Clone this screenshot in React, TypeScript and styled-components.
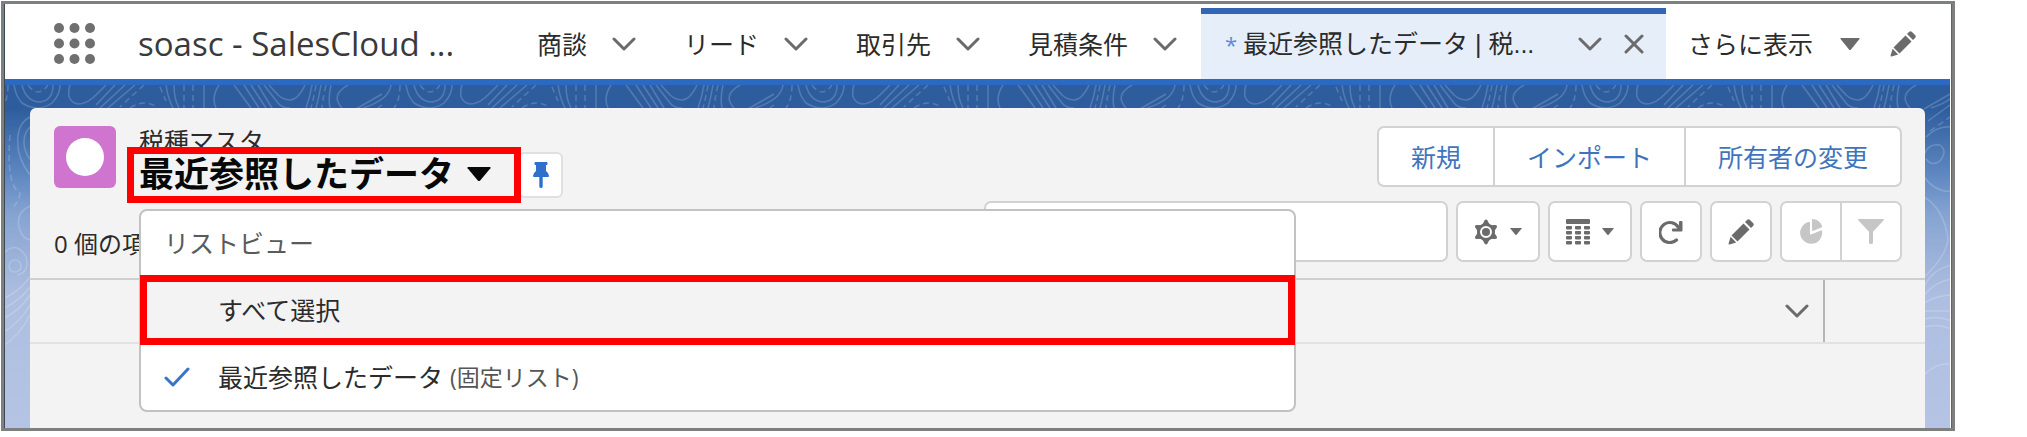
import React from "react";
import styled, { createGlobalStyle, css } from "styled-components";

const GlobalStyle = createGlobalStyle`
  *, *::before, *::after { box-sizing: border-box; }
  body {
    margin: 0;
    background: #fff;
    color: #2b2b2b;
    font-family: "Open Sans", "Noto Sans CJK JP", sans-serif;
    font-size: 25px;
    line-height: 30px;
  }
  button, input { font: inherit; color: inherit; }
  button { padding: 0; border: 0; background: none; cursor: pointer; }
  svg { display: block; flex: none; }
  ul { margin: 0; padding: 0; list-style: none; }
`;

const Frame = styled.div`
  margin: 1px 72px 0 1px;
  border: 3px solid #7e807f;
  box-shadow: inset 1px 0 #3d4a52, inset -1px 0 #5d6670;
  padding: 0 2px 0 1px;
`;

/* ---------- global navigation ---------- */

const NavBar = styled.header`
  display: flex;
  align-items: stretch;
  height: 81px;
  padding: 4px 0 0 49px;
  border-bottom: 6px solid #2b69c3;
  background: #fff;
  white-space: nowrap;
`;

const Launcher = styled.button`
  display: flex;
  align-items: center;
`;

const AppName = styled.div`
  display: flex;
  align-items: center;
  width: 418px;
  padding-left: 43px;
  color: #3a3a3a;
  font-size: 33px;
`;

const NavItems = styled.nav`
  display: flex;
`;

const NavItem = styled.div`
  display: flex;
  align-items: center;
  gap: 25px;
  padding: 0 24px;
`;

const NavLink = styled.a`
  color: inherit;
  text-decoration: none;
`;

const ActiveTab = styled.div`
  display: flex;
  align-items: center;
  width: 465px;
  padding: 0 22px 0 24px;
  background: #e6eff9;
  box-shadow: inset 0 6px #3465b5;
`;

const TabLink = styled(NavLink)`
  font-family: "Liberation Sans", "Noto Sans CJK JP", sans-serif;
`;

const Unsaved = styled.span`
  width: 18px;
  color: #5b8bdc;
  font-size: 22px;
`;

const TabActions = styled.div`
  display: flex;
  align-items: center;
  gap: 22px;
  margin-left: auto;
`;

const MoreButton = styled.button`
  display: flex;
  align-items: center;
  gap: 27px;
  padding: 0 24px 0 22px;
`;

const EditNav = styled.button`
  padding: 0 6px;
`;

/* ---------- page ---------- */

const Backdrop = styled.main`
  position: relative;
  padding: 23px 25px 0;
  background: linear-gradient(#2e5d9e 0, #2e5d9e 24px, #5f88c2 90px, #86a4d2 130px, #adbee0 210px, #b5c4e4 100%);
`;

const Contours = styled.svg`
  position: absolute;
  inset: 0;
  width: 100%;
  height: 100%;
`;

const Card = styled.section`
  position: relative;
  padding-bottom: 84px;
  border-radius: 6px 6px 0 0;
  background: #f3f3f3;
`;

const CardHeader = styled.div`
  display: flex;
  justify-content: space-between;
  padding: 18px 23px 16px 24px;
`;

const Identity = styled.div`
  display: flex;
  align-items: flex-start;
  gap: 11px;
`;

const ObjectIcon = styled.div`
  display: grid;
  place-items: center;
  width: 62px;
  height: 62px;
  border-radius: 6px;
  background: #cf75cf;
`;

const ObjectName = styled.div`
  padding-left: 12px;
`;

const TitleRow = styled.div`
  position: relative;
  display: flex;
  align-items: center;
  margin-top: -9px;
`;

const highlighted = css`
  border: 7px solid #fe0000;
`;

const TitleButton = styled.button`
  ${highlighted}
  position: relative;
  z-index: 1;
  display: flex;
  align-items: center;
  gap: 13px;
  height: 56px;
  padding: 0 23px 2px 5px;
  background: #f3f3f3;
  color: #080808;
  font-size: 35px;
  font-weight: 700;
  line-height: 36px;
  white-space: nowrap;
`;

const PinButton = styled.button`
  display: grid;
  place-items: center;
  width: 45px;
  height: 46px;
  margin-left: -3px;
  border: 2px solid #e0e0e0;
  border-radius: 6px;
  background: #fff;
`;

const ItemCount = styled.p`
  margin: 26px 0 0;
  font-size: 24px;
`;

const Controls = styled.div`
  display: flex;
  flex-direction: column;
  align-items: flex-end;
  gap: 14px;
`;

const Group = styled.div`
  display: flex;
  height: 61px;
  border: 2px solid #d2d2d2;
  border-radius: 7px;
  background: #fff;
  overflow: hidden;
`;

const ActionButton = styled.button`
  padding: 0 32px;
  color: #3f74bd;

  & + & { border-left: 2px solid #d2d2d2; }
`;

const Tools = styled.div`
  display: flex;
  gap: 8px;
`;

const Search = styled.input`
  width: 464px;
  height: 61px;
  padding: 0 20px;
  border: 2px solid #d2d2d2;
  border-radius: 7px;
  background: #fff;
`;

const ToolButton = styled.button<{ $wide?: boolean }>`
  display: flex;
  align-items: center;
  justify-content: center;
  gap: 12px;
  width: ${(p) => (p.$wide ? 80 : 58)}px;
  color: #6b6b6b;

  &:disabled { color: #c6c6c6; }
  & + & { width: 60px; border-left: 2px solid #d2d2d2; }
`;

const Table = styled.table`
  width: 100%;
  border-spacing: 0;
  border-top: 2px solid #cfcfcf;
  border-bottom: 2px solid #e2e2e2;
`;

const HeadCell = styled.th<{ $narrow?: boolean }>`
  width: ${(p) => (p.$narrow ? "100px" : "auto")};
  height: 62px;
  padding: 0 14px;
  border-right: ${(p) => (p.$narrow ? "0" : "2px solid #b5b5b5")};
`;

const SortButton = styled.button`
  display: block;
  margin-left: auto;
`;

/* ---------- list view menu ---------- */

const Menu = styled.div`
  position: absolute;
  z-index: 2;
  top: 62px;
  left: 12px;
  width: 1157px;
  border: 2px solid #c2c2c2;
  border-radius: 8px;
  background: #fff;
  white-space: nowrap;
`;

const MenuLabel = styled.div`
  padding: 17px 23px;
  color: #5a5a5a;
`;

const MenuItem = styled.button<{ $active?: boolean }>`
  display: flex;
  align-items: center;
  width: 100%;
  padding: 17px 23px 18px;
  text-align: left;

  ${(p) =>
    p.$active &&
    css`
      ${highlighted}
      width: calc(100% + 2px);
      margin: 0 -1px;
      padding: 13px 17px;
      background: #f3f3f3;
    `}
`;

const CheckSlot = styled.span`
  width: 54px;
`;

const Note = styled.span`
  margin-left: 7px;
  color: #555;
  font-size: 23px;
`;

/* ---------- icons ---------- */

const Chevron = () => (
  <svg width="24" height="16" viewBox="0 0 24 16" aria-hidden="true">
    <path d="M2 3l10 10L22 3" fill="none" stroke="#6b6b6b" strokeWidth="3" strokeLinecap="round" strokeLinejoin="round" />
  </svg>
);

const Caret = ({ w, h, color }: { w: number; h: number; color: string }) => (
  <svg width={w} height={h} viewBox="0 0 20 12" preserveAspectRatio="none" aria-hidden="true">
    <path d="M1 0h18q1 0 .5 1L11 11.500q-1 1-2 0L.5 1Q0 0 1 0z" fill={color} />
  </svg>
);

const Pencil = () => (
  <svg width="26" height="26" viewBox="0 0 26 26" fill="#6b6b6b" aria-hidden="true">
    <path d="M15.500 4.500l6 6L9.500 22.500l-6-6z" />
    <path d="M17 3l2-2q1.500-1.500 3 0l3 3q1.500 1.500 0 3l-2 2z" />
    <path d="M2.600 17.800l5.600 5.600L1.500 25.400Q.3 25.700.6 24.500z" />
  </svg>
);

const Close = () => (
  <svg width="20" height="20" viewBox="0 0 20 20" aria-hidden="true">
    <path d="M2 2l16 16M18 2L2 18" fill="none" stroke="#6b6b6b" strokeWidth="3" strokeLinecap="round" />
  </svg>
);

const Dots = () => (
  <svg width="41" height="41" viewBox="0 0 41 41" fill="#6f6f6f" aria-hidden="true">
    {[5, 20.5, 36].map((y) => [5, 20.5, 36].map((x) => <circle key={`${x}-${y}`} cx={x} cy={y} r="5" />))}
  </svg>
);

const Pin = () => (
  <svg width="16" height="26" viewBox="0 0 16 26" fill="#2f70cc" aria-hidden="true">
    <path d="M2.500 0h11q1 0 1 1v1q0 1-1 1H13v6q3 2 3 5 0 1-1 1h-5.300v9.500q0 1.500-1.700 1.500t-1.700-1.500V15H1q-1 0-1-1 0-3 3-5V3h-.5q-1 0-1-1V1q0-1 1-1z" />
  </svg>
);

const Gear = () => (
  <svg width="24" height="26" viewBox="0 0 24 26" aria-hidden="true">
    <g fill="#6b6b6b">
      <circle cx="12" cy="13" r="9" />
      {[0, 60, 120, 180, 240, 300].map((a) => (
        <path key={a} d="M8 6.500L10.500 1.500q1.500-2 3 0L16 6.500z" transform={`rotate(${a} 12 13)`} />
      ))}
    </g>
    <circle cx="12" cy="13" r="5" fill="none" stroke="#fff" strokeWidth="2" />
  </svg>
);

const Grid = () => (
  <svg width="24" height="26" viewBox="0 0 24 26" fill="#6b6b6b" aria-hidden="true">
    <rect width="24" height="5" rx="1" />
    {[7, 12, 17, 22].map((y) => [0, 9, 18].map((x) => <rect key={`${x}-${y}`} x={x} y={y} width="6" height="3.400" rx=".8" />))}
  </svg>
);

const Refresh = () => (
  <svg width="24" height="24" viewBox="0 0 24 24" aria-hidden="true">
    <path d="M17.500 20A10 10 0 1 1 19.500 7.500" fill="none" stroke="#6b6b6b" strokeWidth="3.200" strokeLinecap="round" />
    <path d="M21 1h1.500q1 0 1 1v8.500q0 1-1 1H14q-1 0-1-1V9.500q0-1 1-1h6V2q0-1 1-1z" fill="#6b6b6b" />
  </svg>
);

const Pie = () => (
  <svg width="24" height="25" viewBox="0 0 24 25" fill="currentColor" aria-hidden="true">
    <path d="M10 3q1-.2 1 .8v11q0 1 .9.6l10-4q1-.4 1.100.6A11 11 0 1 1 10 3z" />
    <path d="M13 1q0-1 1-.9 7 .9 9 7 .3 1-.6 1.300l-8.200 3.300q-1.200.5-1.200-.7z" />
  </svg>
);

const Funnel = () => (
  <svg width="26" height="25" viewBox="0 0 26 25" fill="currentColor" aria-hidden="true">
    <path d="M1 0h24q1.500 0 .7 1.200L15 12.800V23.500q0 1.500-1.500 1.500h-1q-1.500 0-1.500-1.500V12.800L.3 1.200Q-.5 0 1 0z" />
  </svg>
);

const Check = () => (
  <svg width="26" height="20" viewBox="0 0 26 20" aria-hidden="true">
    <path d="M2 11l7 7L24 2" fill="none" stroke="#3a74c8" strokeWidth="3" strokeLinecap="round" strokeLinejoin="round" />
  </svg>
);

const Topography = () => (
  <Contours aria-hidden="true">
    <defs>
      <pattern id="contours" x="-107" y="0" width="392" height="400" patternUnits="userSpaceOnUse">
        <g fill="none" stroke="#fff" strokeOpacity=".18" strokeWidth="1.500">
          <path d="M0 15q8 0 15-15M22 0q-2 12-6 23M31 0q-2 12-5 23M41 0q-3 12-1 23M58 0Q40 10 52 23M101 0q-2 15-28 23" />
          <path d="M116 0q2 12 8 18 16 10 30 0 8-8 8-18M124 0q4 16 17 17 14-1 14-17M172 0q-5 16 8 19 10 0 20-11l8-8" />
          <path d="M217 0l-19 20M227 0l-25 23M237 0l-27 23M268 0q2 14 7 23M276 0q0 14 5 23M306 0v23M321 0q-8 12-3 23" />
          <path d="M336 0l17 23M346 0l15 23M353 0l15 23M360 0l14 23M366 0l14 18q4 5 12 5M371 0l9 10q6 5 12 5" />
          <path d="M132 32c-16 8-17 36 0 58M132 42c-8 8-8 22 0 32M132 121q-16 8-10 24 2 8 10 10M104 170q14-16 24 2 4 14-8 18M104 214q16-6 28-22M104 224q18-8 28-22M104 234q18-8 28-24M104 248q18-10 28-28M104 262q18-12 28-32" />
          <circle cx="117" cy="181" r="6" />
          <path d="M66 24l26-15M70 36l22-16M68 52q12-12 26-10M66 70q4-12 16-10 8 6 0 16-8 6-14-2M66 92q12 16 28 14M66 112q20 12 24 42-2 18-24 38M66 202q8-18 28-22M66 210q12-14 28-16M66 218q14-8 28-8M66 226h28M66 234q14-4 28 2M66 242q14-4 28 2M66 290q14-14 28-10" />
          <g strokeDasharray="6 4">
            <path d="M26 0q-2 12-5 23M36 0q-3 12-4 23M110 0q0 15-6 23M130 0q10 14 20 0M246 0l-24 22M232 23q15-10 28 0M262 2l6 14M286 0v23M295 0v23M112 50q-4 50 10 58-2 12-10 16M72 46l20-14" />
          </g>
        </g>
      </pattern>
    </defs>
    <rect width="100%" height="100%" fill="url(#contours)" />
  </Contours>
);

const navItems = ["商談", "リード", "取引先", "見積条件"];

export default function App() {
  return (
    <>
      <GlobalStyle />
      <Frame>
        <NavBar>
          <Launcher aria-label="アプリケーションランチャー">
            <Dots />
          </Launcher>
          <AppName>soasc - SalesCloud ...</AppName>
          <NavItems>
            {navItems.map((name) => (
              <NavItem key={name}>
                <NavLink href="#">{name}</NavLink>
                <button aria-label={`${name} メニュー`}>
                  <Chevron />
                </button>
              </NavItem>
            ))}
            <ActiveTab>
              <Unsaved>*</Unsaved>
              <TabLink href="#" aria-current="page">最近参照したデータ | 税...</TabLink>
              <TabActions>
                <button aria-label="タブメニュー">
                  <Chevron />
                </button>
                <button aria-label="タブを閉じる">
                  <Close />
                </button>
              </TabActions>
            </ActiveTab>
            <MoreButton>
              さらに表示
              <Caret w={20} h={12} color="#6b6b6b" />
            </MoreButton>
            <EditNav aria-label="ナビゲーションを編集">
              <Pencil />
            </EditNav>
          </NavItems>
        </NavBar>

        <Backdrop>
          <Topography />
          <Card>
            <CardHeader>
              <div>
                <Identity>
                  <ObjectIcon>
                    <svg width="38" height="38" viewBox="0 0 38 38" aria-hidden="true">
                      <circle cx="19" cy="19" r="19" fill="#fff" />
                    </svg>
                  </ObjectIcon>
                  <div>
                    <ObjectName>税種マスタ</ObjectName>
                    <TitleRow>
                      <TitleButton aria-haspopup="menu" aria-expanded="true">
                        最近参照したデータ
                        <Caret w={24} h={14} color="#080808" />
                      </TitleButton>
                      <PinButton aria-label="リストビューを固定">
                        <Pin />
                      </PinButton>
                      <Menu>
                        <MenuLabel>リストビュー</MenuLabel>
                        <ul>
                          <li>
                            <MenuItem $active>
                              <CheckSlot />
                              すべて選択
                            </MenuItem>
                          </li>
                          <li>
                            <MenuItem>
                              <CheckSlot>
                                <Check />
                              </CheckSlot>
                              最近参照したデータ
                              <Note>(固定リスト)</Note>
                            </MenuItem>
                          </li>
                        </ul>
                      </Menu>
                    </TitleRow>
                  </div>
                </Identity>
                <ItemCount>0 個の項</ItemCount>
              </div>

              <Controls>
                <Group>
                  <ActionButton>新規</ActionButton>
                  <ActionButton>インポート</ActionButton>
                  <ActionButton>所有者の変更</ActionButton>
                </Group>
                <Tools>
                  <Search type="search" aria-label="このリストを検索" />
                  <Group>
                    <ToolButton $wide aria-label="リストビューコントロール">
                      <Gear />
                      <Caret w={12} h={7} color="#6b6b6b" />
                    </ToolButton>
                  </Group>
                  <Group>
                    <ToolButton $wide aria-label="表示形式">
                      <Grid />
                      <Caret w={12} h={7} color="#6b6b6b" />
                    </ToolButton>
                  </Group>
                  <Group>
                    <ToolButton aria-label="更新">
                      <Refresh />
                    </ToolButton>
                  </Group>
                  <Group>
                    <ToolButton aria-label="編集">
                      <Pencil />
                    </ToolButton>
                  </Group>
                  <Group>
                    <ToolButton disabled aria-label="グラフ">
                      <Pie />
                    </ToolButton>
                    <ToolButton disabled aria-label="条件">
                      <Funnel />
                    </ToolButton>
                  </Group>
                </Tools>
              </Controls>
            </CardHeader>

            <Table>
              <thead>
                <tr>
                  <HeadCell>
                    <SortButton aria-label="並び替え">
                      <Chevron />
                    </SortButton>
                  </HeadCell>
                  <HeadCell $narrow />
                </tr>
              </thead>
            </Table>
          </Card>
        </Backdrop>
      </Frame>
    </>
  );
}
